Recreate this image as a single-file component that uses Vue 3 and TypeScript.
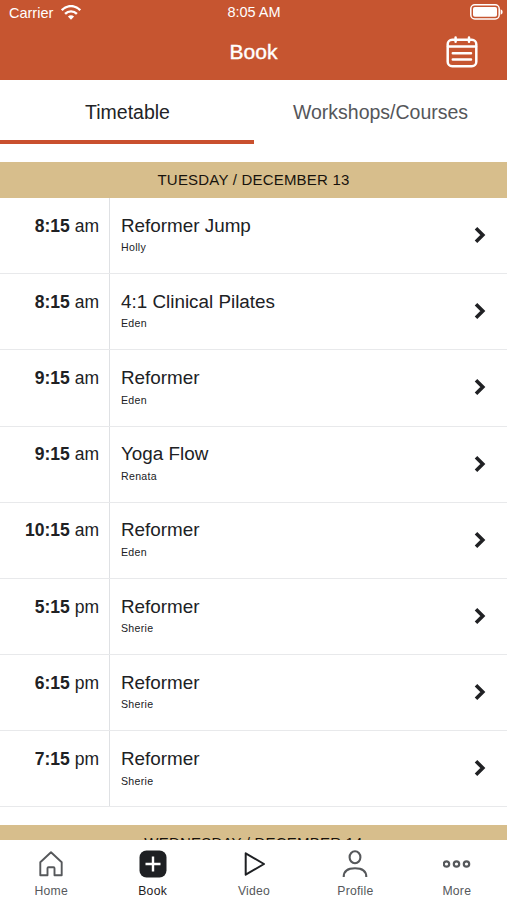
<script setup lang="ts">
interface Session {
  time: string
  period: 'am' | 'pm'
  title: string
  teacher: string
}

const sessions: Session[] = [
  { time: '8:15', period: 'am', title: 'Reformer Jump', teacher: 'Holly' },
  { time: '8:15', period: 'am', title: '4:1 Clinical Pilates', teacher: 'Eden' },
  { time: '9:15', period: 'am', title: 'Reformer', teacher: 'Eden' },
  { time: '9:15', period: 'am', title: 'Yoga Flow', teacher: 'Renata' },
  { time: '10:15', period: 'am', title: 'Reformer', teacher: 'Eden' },
  { time: '5:15', period: 'pm', title: 'Reformer', teacher: 'Sherie' },
  { time: '6:15', period: 'pm', title: 'Reformer', teacher: 'Sherie' },
  { time: '7:15', period: 'pm', title: 'Reformer', teacher: 'Sherie' },
]
</script>

<template>
  <div class="app">
    <header class="top">
      <div class="status">
        <div class="carrier">
          <span>Carrier</span>
          <svg class="wifi" width="20" height="15" viewBox="0 0 20 15" fill="none" stroke="currentColor" stroke-width="2.4">
            <path d="M.8 5.200C6-.3 14-.3 19.200 5.200" />
            <path d="M4.100 8.900C7.400 5.500 12.600 5.500 15.900 8.900" />
            <path d="M10 14.700 6.900 11.600Q10 8.800 13.100 11.600Z" fill="currentColor" stroke="none" />
          </svg>
        </div>
        <span class="clock">8:05 AM</span>
        <svg class="battery" width="33" height="16" viewBox="0 0 33 16" fill="none">
          <rect x=".8" y=".8" width="28.400" height="14.200" rx="4" stroke="currentColor" stroke-width="1.500" />
          <rect x="3" y="3" width="24" height="9.800" rx="1.800" fill="currentColor" />
          <path d="M30.600 5.300Q32.700 6 32.700 8T30.600 10.700Z" fill="currentColor" />
        </svg>
      </div>
      <div class="bar">
        <span />
        <h1>Book</h1>
        <svg class="calendar" width="32" height="32" viewBox="0 0 32 32" fill="none" stroke="currentColor" stroke-width="2.500" stroke-linecap="round">
          <rect x="1.700" y="3.800" width="28.600" height="26.500" rx="4.500" />
          <path d="M2 10.600H30M9.600 1.500V5.800M23 1.500V5.800M6.800 17.200H25M6.800 23.500H25" />
        </svg>
      </div>
    </header>

    <nav class="tabs">
      <div class="tab selected">Timetable</div>
      <div class="tab">Workshops/Courses</div>
    </nav>

    <main class="schedule">
      <h2 class="day">TUESDAY / DECEMBER 13</h2>
      <div v-for="(s, i) in sessions" :key="i" class="row">
        <div class="time"><b>{{ s.time }}</b> {{ s.period }}</div>
        <div class="info">
          <div class="title">{{ s.title }}</div>
          <div class="teacher">{{ s.teacher }}</div>
        </div>
        <svg class="chevron" width="12" height="18" viewBox="0 0 12 18" fill="none" stroke="currentColor" stroke-width="3.600">
          <path d="M2 2.200 8.800 9 2 15.800" />
        </svg>
      </div>
      <h2 class="day next">WEDNESDAY / DECEMBER 14</h2>
    </main>

    <footer class="dock">
      <div class="item">
        <svg width="28" height="28" viewBox="0 0 28 28" fill="none" stroke="currentColor" stroke-width="1.900" stroke-linejoin="round">
          <path d="M3.300 12.300 14 2.300 24.700 12.300V25.300H17.500V18.200Q17.500 17.200 16.500 17.200H11.500Q10.500 17.200 10.500 18.200V25.300H3.300Z" />
        </svg>
        <span>Home</span>
      </div>
      <div class="item active">
        <svg width="28" height="28" viewBox="0 0 28 28" fill="none">
          <rect x=".5" y=".5" width="27" height="27" rx="7" fill="currentColor" />
          <path d="M14 6.500V21.500M6.500 14H21.500" stroke="#fff" stroke-width="2.400" />
        </svg>
        <span>Book</span>
      </div>
      <div class="item">
        <svg class="dark" width="28" height="28" viewBox="0 0 28 28" fill="none" stroke="currentColor" stroke-width="2" stroke-linejoin="round">
          <path d="M5.700 3.300 24 14 5.700 24.700Z" />
        </svg>
        <span>Video</span>
      </div>
      <div class="item">
        <svg width="28" height="28" viewBox="0 0 28 28" fill="none" stroke="currentColor" stroke-width="2.100">
          <ellipse cx="14" cy="7.300" rx="5.400" ry="6" />
          <path d="M2.700 27C2.700 21 7 18.300 14 18.300S25.300 21 25.300 27" />
        </svg>
        <span>Profile</span>
      </div>
      <div class="item">
        <svg width="28" height="28" viewBox="0 0 28 28" fill="none" stroke="currentColor" stroke-width="2.200">
          <circle cx="3.500" cy="14" r="2.700" />
          <circle cx="13.500" cy="14" r="2.700" />
          <circle cx="23.500" cy="14" r="2.700" />
        </svg>
        <span>More</span>
      </div>
    </footer>
  </div>
</template>

<style>
body {
  overflow: hidden;
}
</style>

<style scoped>
.app {
  display: flex;
  flex-direction: column;
  width: 507px;
  height: 900px;
  overflow: hidden;
  background: #fff;
  color: #202124;
  font-family: "Liberation Sans", Arial, sans-serif;
}
svg {
  display: block;
}
.top {
  flex: none;
  height: 80px;
  background: #c65530;
  color: #fff;
}
.status,
.bar {
  display: grid;
  grid-template-columns: 1fr auto 1fr;
}
.status {
  height: 24px;
  padding: 0 4px 0 9px;
  align-items: center;
  font-size: 14.500px;
}
.carrier {
  display: flex;
  gap: 8px;
  align-items: center;
  padding-top: 1px;
}
.clock {
  padding-right: 4px;
}
.battery,
.calendar {
  justify-self: end;
}
.bar {
  height: 56px;
  align-items: center;
  padding: 0 29px;
}
h1 {
  margin: 0;
  font-size: 21px;
  font-weight: 400;
  -webkit-text-stroke: 0.400px currentColor;
}
.tabs {
  flex: none;
  display: flex;
  height: 64px;
}
.tab {
  flex: 1;
  box-sizing: border-box;
  border-bottom: 4px solid transparent;
  text-align: center;
  line-height: 64px;
  font-size: 19.500px;
  color: #55565a;
}
.selected {
  padding-left: 1px;
  color: #222326;
  border-color: #c9502e;
}
.schedule {
  flex: 1;
  min-height: 0;
  overflow: hidden;
  padding-top: 18px;
}
.day {
  margin: 0;
  height: 36px;
  line-height: 36px;
  background: #d7be8c;
  color: #17130c;
  text-align: center;
  font-size: 15px;
  font-weight: 400;
  letter-spacing: 0.200px;
}
.next {
  margin-top: 17.800px;
}
.row {
  display: grid;
  grid-template-columns: 110px 1fr 39px;
  box-sizing: border-box;
  height: 76.180px;
  border-bottom: 1px solid #e8e9eb;
}
.time {
  box-sizing: border-box;
  border-right: 1px solid #dfe1e4;
  padding: 16.800px 10px 0 0;
  text-align: right;
  font-size: 17.500px;
  line-height: 22px;
}
.info {
  padding: 16.800px 0 0 11px;
}
.title {
  font-size: 18.850px;
  line-height: 22px;
}
.teacher {
  margin-top: 3.500px;
  font-size: 10.600px;
  line-height: 14px;
  letter-spacing: 0.300px;
}
.chevron {
  align-self: center;
  margin: -1px 0 0 6px;
}
.dock {
  flex: none;
  display: flex;
  height: 60px;
  background: #fff;
}
.item {
  flex: 1;
  display: flex;
  flex-direction: column;
  align-items: center;
  padding: 10px 0 0 1px;
  gap: 6px;
  font-size: 12.200px;
  line-height: 14px;
  letter-spacing: 0.250px;
  color: #56585b;
}
.active,
.dark {
  color: #1e2023;
}
</style>
